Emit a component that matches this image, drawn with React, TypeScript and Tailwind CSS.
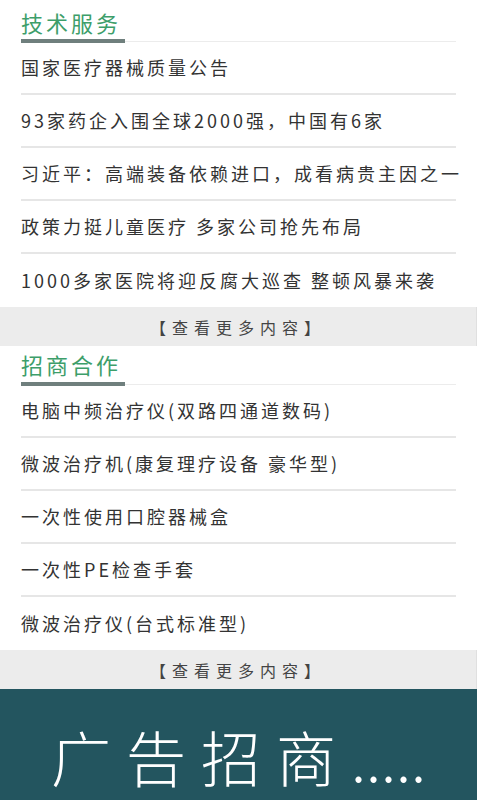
import React from "react";

const font = { fontFamily: '"Noto Sans CJK SC", "Noto Sans", sans-serif' };

const news = [
  "国家医疗器械质量公告",
  "93家药企入围全球2000强，中国有6家",
  "习近平：高端装备依赖进口，成看病贵主因之一",
  "政策力挺儿童医疗 多家公司抢先布局",
  "1000多家医院将迎反腐大巡查 整顿风暴来袭",
];

const products = [
  "电脑中频治疗仪(双路四通道数码)",
  "微波治疗机(康复理疗设备 豪华型)",
  "一次性使用口腔器械盒",
  "一次性PE检查手套",
  "微波治疗仪(台式标准型)",
];

function Section({ title, items, first }: { title: string; items: string[]; first?: boolean }) {
  return (
    <div className="px-[21px]">
      <div
        className={`relative flex items-center border-b border-[#ececec] ${
          first ? "h-[42px] pt-[4px]" : "h-[39px]"
        }`}
      >
        <span className="text-[22px] tracking-[3px] leading-none text-[#3d9e6a] pb-[2px]">{title}</span>
        <div className="absolute left-0 bottom-[-2px] w-[104px] h-[4px] bg-[#6f7f7d]" />
      </div>
      {items.map((t, i) => (
        <div
          key={i}
          className={`h-[53px] flex items-center whitespace-nowrap text-[18px] tracking-[3px] text-[#333] ${
            i < items.length - 1 ? "border-b-2 border-[#e6e6e6]" : ""
          }`}
        >
          {t}
        </div>
      ))}
    </div>
  );
}

function MoreBar() {
  return (
    <div className="h-[39px] bg-[#ececec] flex items-center justify-center text-[16px] tracking-[6px] text-[#444] border-r border-[#e0e0e0]">
      【查看更多内容】
    </div>
  );
}

export default function App() {
  return (
    <div className="w-[480px] h-[800px] overflow-hidden bg-white" style={font}>
      <div className="w-[477px]">
        <Section title="技术服务" items={news} first />
        <MoreBar />
        <Section title="招商合作" items={products} />
        <MoreBar />
        <div className="h-[111px] bg-[#23555f] flex items-start justify-center pt-[37px] text-white font-light">
          <span className="text-[60px] leading-none tracking-[15px]">广告招商</span>
          <span className="text-[60px] leading-none">.....</span>
        </div>
      </div>
    </div>
  );
}
